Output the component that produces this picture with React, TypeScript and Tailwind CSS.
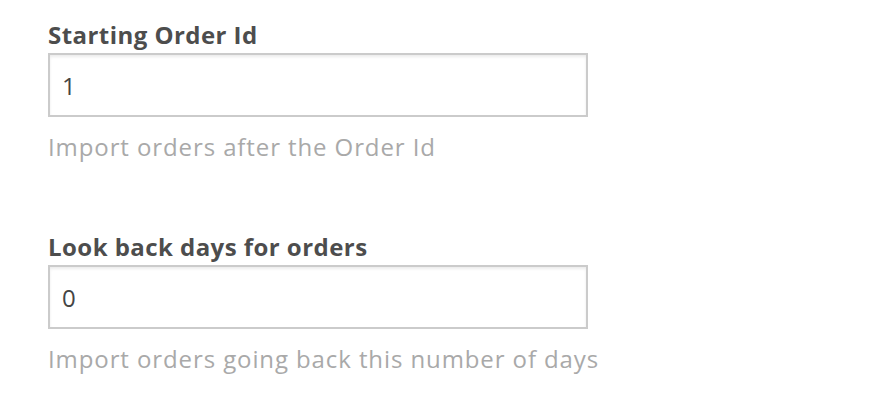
import React from "react";

type FieldProps = {
  label: string;
  value: string;
  help: string;
};

function Field({ label, value, help }: FieldProps) {
  return (
    <div className="flex flex-col">
      <label className="text-[24px] leading-[30px] font-bold tracking-[0.45px] text-[#4d4d4d]">
        {label}
      </label>
      <input
        type="text"
        defaultValue={value}
        className="mt-[3px] h-[64px] w-[540px] border-2 border-[#cbcbcb] bg-white px-[12px] text-[24px] text-[#444] shadow-[inset_0_2px_3px_rgba(0,0,0,0.08)] outline-none"
      />
      <p className="mt-[15px] text-[24px] leading-[30px] tracking-[0.9px] text-[#a9a9a9]">{help}</p>
    </div>
  );
}

export default function App() {
  return (
    <div
      className="flex min-h-[400px] w-[875px] flex-col gap-[70px] bg-white pl-[48px] pt-[20px]"
      style={{ fontFamily: '"Open Sans", sans-serif' }}
    >
      <Field label="Starting Order Id" value="1" help="Import orders after the Order Id" />
      <Field
        label="Look back days for orders"
        value="0"
        help="Import orders going back this number of days"
      />
    </div>
  );
}
